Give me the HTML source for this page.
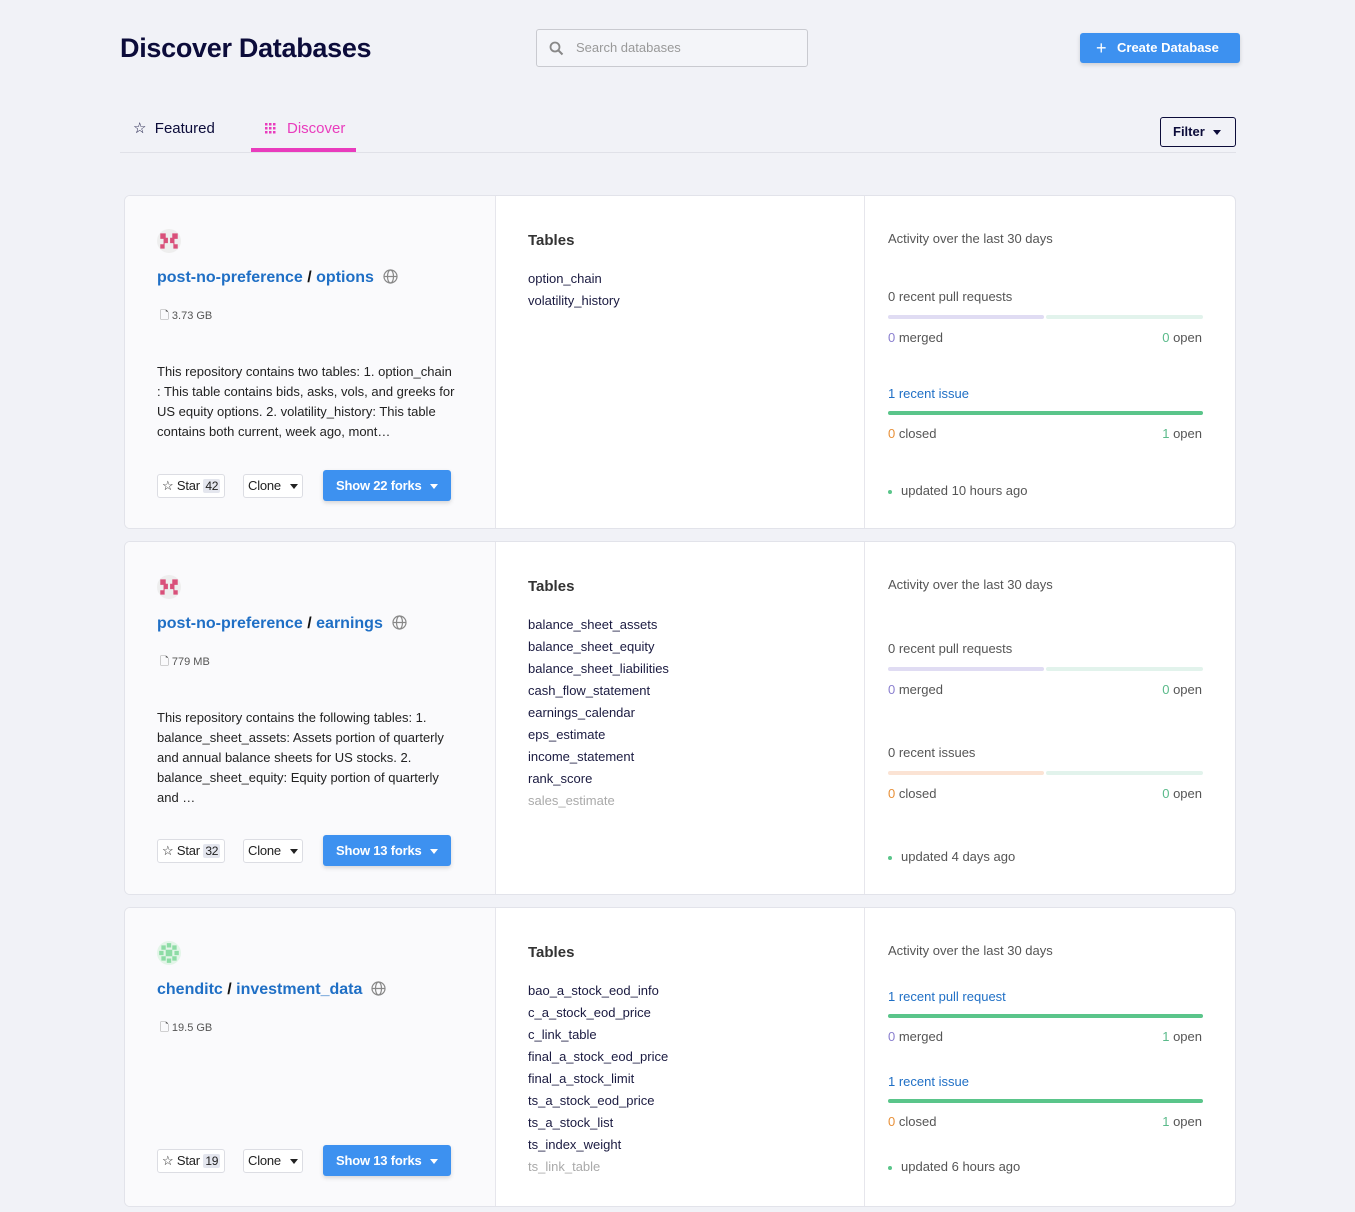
<!DOCTYPE html>
<html><head><meta charset="utf-8"><style>
*{box-sizing:border-box;margin:0;padding:0}
body{width:1355px;height:1212px;background:#f1f2f7;font-family:"Liberation Sans",sans-serif;color:#333;position:relative;overflow:hidden;font-size:13px}
.a{position:absolute;line-height:20px;white-space:nowrap}
h1{position:absolute;left:120px;top:33px;font-size:27px;font-weight:bold;color:#0c0c3a;letter-spacing:-0.3px}
.search{position:absolute;left:536px;top:29px;width:272px;height:38px;border:1px solid #c9cad0;border-radius:3px;background:#f4f5f9}
.create{position:absolute;left:1080px;top:33px;width:160px;height:30px;background:#3d91f0;border-radius:3px;color:#fff;font-weight:bold;font-size:13px;line-height:30px;padding-left:37px;box-shadow:0 2px 4px rgba(0,0,0,.15)}
.filter{position:absolute;left:1160px;top:117px;width:76px;height:30px;border:1px solid #0c0c3a;border-radius:3px;color:#0c0c3a;font-weight:bold;line-height:28px;padding-left:12px}
.card{position:absolute;left:124px;width:1112px;background:#fff;border:1px solid #e2e3ea;border-radius:6px;overflow:hidden}
.c1{position:absolute;left:0;top:0;bottom:0;width:371px;background:#fafafc;border-right:1px solid #e6e6ec}
.c2{position:absolute;left:371px;top:0;bottom:0;width:369px;border-right:1px solid #e6e6ec}
.title{font-size:16px;font-weight:bold;color:#1f6fc5}
.title span{color:#111}
.title svg{vertical-align:-2px;margin-left:9px}
.desc{white-space:normal;width:298px;font-size:13px;color:#222}
.btn{position:absolute;height:24px;border:1px solid #dcdde3;border-radius:3px;background:#fff;line-height:22px;padding:0 4px;font-size:13px;color:#222;letter-spacing:-0.2px}
.cnt{background:#e4e6ee;padding:0 2px;border-radius:2px;font-size:12px}
.forks{position:absolute;height:31px;width:128px;background:#3d91f0;border-radius:3px;color:#fff;font-weight:bold;line-height:31px;padding-left:13px;box-shadow:0 2px 4px rgba(0,0,0,.15);letter-spacing:-0.2px}
.tri{display:inline-block;width:0;height:0;border-left:4px solid transparent;border-right:4px solid transparent;border-top:5px solid currentColor;vertical-align:middle;margin-left:8px}
.th{font-size:15px;font-weight:bold;color:#333}
.tl{color:#1a1a40}
.bar{position:absolute;height:4px;border-radius:2px}
.g{color:#5aba8a}.o{color:#e8913a}.p{color:#8a7fcf}
.lk{color:#1f6fc5}
.gr{color:#555}
.dot{display:inline-block;width:4px;height:4px;border-radius:50%;background:#5ac58a;margin-right:9px;vertical-align:middle}
</style></head><body>
<h1>Discover Databases</h1>
<div class="search">
<svg style="position:absolute;left:12px;top:11px" width="15" height="15" viewBox="0 0 15 15"><circle cx="6" cy="6" r="4.5" fill="none" stroke="#888" stroke-width="1.8"/><path d="M9.5 9.5L13.5 13.5" stroke="#888" stroke-width="2"/></svg>
<div class="a" style="left:39px;top:8px;color:#999;font-size:13px">Search databases</div></div>
<div class="create"><span style="position:absolute;left:16px;font-weight:normal;font-size:18px">+</span>Create Database</div>
<div class="a" style="left:133px;top:119px;font-size:15px;color:#0c0c3a">☆ &nbsp;Featured</div>
<svg style="position:absolute;left:265px;top:123px" width="11" height="11" viewBox="0 0 11 11" fill="#e93cbd"><rect x="0" y="0" width="2.5" height="2.5"/><rect x="4" y="0" width="2.5" height="2.5"/><rect x="8" y="0" width="2.5" height="2.5"/><rect x="0" y="4" width="2.5" height="2.5"/><rect x="4" y="4" width="2.5" height="2.5"/><rect x="8" y="4" width="2.5" height="2.5"/><rect x="0" y="8" width="2.5" height="2.5"/><rect x="4" y="8" width="2.5" height="2.5"/><rect x="8" y="8" width="2.5" height="2.5"/></svg>
<div class="a" style="left:287px;top:119px;font-size:15px;color:#e93cbd">Discover</div>
<div style="position:absolute;left:120px;top:152px;width:1116px;height:1px;background:#e0e1e8"></div>
<div style="position:absolute;left:251px;top:148px;width:105px;height:4px;background:#e93cbd"></div>
<div class="filter">Filter<span class="tri"></span></div>

<!-- card 1 -->
<div class="card" style="top:195px;height:334px">
<div class="c1"></div><div class="c2"></div>
<svg style="position:absolute;left:32px;top:33px" width="24" height="24" viewBox="0 0 22 22"><circle cx="11" cy="11" r="11" fill="#eee"/><path d="M3 4h5v4h2v5H7v5H3v-4h3V9H3zM19 4h-5v4h-2v5h3v5h4v-4h-3V9h3z" fill="#d9507a"/></svg>
<div class="a title" style="left:32px;top:72px">post-no-preference <span>/</span> options<svg width="15" height="15" viewBox="0 0 15 15" fill="none" stroke="#888" stroke-width="1.2"><circle cx="7.5" cy="7.5" r="6.5"/><ellipse cx="7.5" cy="7.5" rx="3" ry="6.5"/><path d="M1 7.5h13"/></svg></div>
<div class="a" style="left:35px;top:110px;font-size:11px;color:#555">🗋 3.73 GB</div>
<div class="a desc" style="left:32px;top:166px">This repository contains two tables: 1. option_chain : This table contains bids, asks, vols, and greeks for US equity options. 2. volatility_history: This table contains both current, week ago, mont…</div>
<div class="btn" style="left:32px;top:278px">☆ Star <span class="cnt">42</span></div>
<div class="btn" style="left:118px;top:278px">Clone<span class="tri" style="margin-left:9px"></span></div>
<div class="forks" style="left:198px;top:274px">Show 22 forks<span class="tri"></span></div>
<div class="a th" style="left:403px;top:35px">Tables</div>
<div class="a tl" style="left:403px;top:72px;line-height:22px">option_chain<br>volatility_history</div>
<div class="a gr" style="left:763px;top:33px">Activity over the last 30 days</div>
<div class="a gr" style="left:763px;top:91px">0 recent pull requests</div>
<div class="bar" style="left:763px;top:119px;width:156px;background:#e0dcf3"></div><div class="bar" style="left:921px;top:119px;width:157px;background:#e2f3ec"></div>
<div class="a gr" style="left:763px;top:132px"><span class="p">0</span> merged</div>
<div class="a gr" style="right:33px;top:132px"><span class="g">0</span> open</div>
<div class="a lk" style="left:763px;top:188px">1 recent issue</div>
<div class="bar" style="left:763px;top:215px;width:315px;background:#5ac58a"></div>
<div class="a gr" style="left:763px;top:228px"><span class="o">0</span> closed</div>
<div class="a gr" style="right:33px;top:228px"><span class="g">1</span> open</div>
<div class="a gr" style="left:763px;top:285px"><span class="dot"></span>updated 10 hours ago</div>
</div>

<!-- card 2 -->
<div class="card" style="top:541px;height:354px">
<div class="c1"></div><div class="c2"></div>
<svg style="position:absolute;left:32px;top:33px" width="24" height="24" viewBox="0 0 22 22"><circle cx="11" cy="11" r="11" fill="#eee"/><path d="M3 4h5v4h2v5H7v5H3v-4h3V9H3zM19 4h-5v4h-2v5h3v5h4v-4h-3V9h3z" fill="#d9507a"/></svg>
<div class="a title" style="left:32px;top:72px">post-no-preference <span>/</span> earnings<svg width="15" height="15" viewBox="0 0 15 15" fill="none" stroke="#888" stroke-width="1.2"><circle cx="7.5" cy="7.5" r="6.5"/><ellipse cx="7.5" cy="7.5" rx="3" ry="6.5"/><path d="M1 7.5h13"/></svg></div>
<div class="a" style="left:35px;top:110px;font-size:11px;color:#555">🗋 779 MB</div>
<div class="a desc" style="left:32px;top:166px">This repository contains the following tables: 1. balance_sheet_assets: Assets portion of quarterly and annual balance sheets for US stocks. 2. balance_sheet_equity: Equity portion of quarterly and …</div>
<div class="btn" style="left:32px;top:297px">☆ Star <span class="cnt">32</span></div>
<div class="btn" style="left:118px;top:297px">Clone<span class="tri" style="margin-left:9px"></span></div>
<div class="forks" style="left:198px;top:293px">Show 13 forks<span class="tri"></span></div>
<div class="a th" style="left:403px;top:35px">Tables</div>
<div class="a tl" style="left:403px;top:72px;line-height:22px">balance_sheet_assets<br>balance_sheet_equity<br>balance_sheet_liabilities<br>cash_flow_statement<br>earnings_calendar<br>eps_estimate<br>income_statement<br>rank_score<br><span style="color:#aaa">sales_estimate</span></div>
<div class="a gr" style="left:763px;top:33px">Activity over the last 30 days</div>
<div class="a gr" style="left:763px;top:97px">0 recent pull requests</div>
<div class="bar" style="left:763px;top:125px;width:156px;background:#e0dcf3"></div><div class="bar" style="left:921px;top:125px;width:157px;background:#e2f3ec"></div>
<div class="a gr" style="left:763px;top:138px"><span class="p">0</span> merged</div>
<div class="a gr" style="right:33px;top:138px"><span class="g">0</span> open</div>
<div class="a gr" style="left:763px;top:201px">0 recent issues</div>
<div class="bar" style="left:763px;top:229px;width:156px;background:#fbe3d4"></div><div class="bar" style="left:921px;top:229px;width:157px;background:#e2f3ec"></div>
<div class="a gr" style="left:763px;top:242px"><span class="o">0</span> closed</div>
<div class="a gr" style="right:33px;top:242px"><span class="g">0</span> open</div>
<div class="a gr" style="left:763px;top:305px"><span class="dot"></span>updated 4 days ago</div>
</div>

<!-- card 3 -->
<div class="card" style="top:907px;height:300px">
<div class="c1"></div><div class="c2"></div>
<svg style="position:absolute;left:32px;top:33px" width="24" height="24" viewBox="0 0 22 22"><circle cx="11" cy="11" r="11" fill="#e3f5e8"/><path d="M4 4h4v4H4zM14 4h4v4h-4zM8 8h6v6H8zM4 14h4v4H4zM14 14h4v4h-4zM9 2h4v4H9zM9 16h4v4H9zM2 9h4v4H2zM16 9h4v4h-4z" fill="#8ddca5"/></svg>
<div class="a title" style="left:32px;top:72px">chenditc <span>/</span> investment_data<svg width="15" height="15" viewBox="0 0 15 15" fill="none" stroke="#888" stroke-width="1.2"><circle cx="7.5" cy="7.5" r="6.5"/><ellipse cx="7.5" cy="7.5" rx="3" ry="6.5"/><path d="M1 7.5h13"/></svg></div>
<div class="a" style="left:35px;top:110px;font-size:11px;color:#555">🗋 19.5 GB</div>
<div class="btn" style="left:32px;top:241px">☆ Star <span class="cnt">19</span></div>
<div class="btn" style="left:118px;top:241px">Clone<span class="tri" style="margin-left:9px"></span></div>
<div class="forks" style="left:198px;top:237px">Show 13 forks<span class="tri"></span></div>
<div class="a th" style="left:403px;top:35px">Tables</div>
<div class="a tl" style="left:403px;top:72px;line-height:22px">bao_a_stock_eod_info<br>c_a_stock_eod_price<br>c_link_table<br>final_a_stock_eod_price<br>final_a_stock_limit<br>ts_a_stock_eod_price<br>ts_a_stock_list<br>ts_index_weight<br><span style="color:#aaa">ts_link_table</span></div>
<div class="a gr" style="left:763px;top:33px">Activity over the last 30 days</div>
<div class="a lk" style="left:763px;top:79px">1 recent pull request</div>
<div class="bar" style="left:763px;top:106px;width:315px;background:#5ac58a"></div>
<div class="a gr" style="left:763px;top:119px"><span class="p">0</span> merged</div>
<div class="a gr" style="right:33px;top:119px"><span class="g">1</span> open</div>
<div class="a lk" style="left:763px;top:164px">1 recent issue</div>
<div class="bar" style="left:763px;top:191px;width:315px;background:#5ac58a"></div>
<div class="a gr" style="left:763px;top:204px"><span class="o">0</span> closed</div>
<div class="a gr" style="right:33px;top:204px"><span class="g">1</span> open</div>
<div class="a gr" style="left:763px;top:249px"><span class="dot"></span>updated 6 hours ago</div>
</div>
</body></html>
